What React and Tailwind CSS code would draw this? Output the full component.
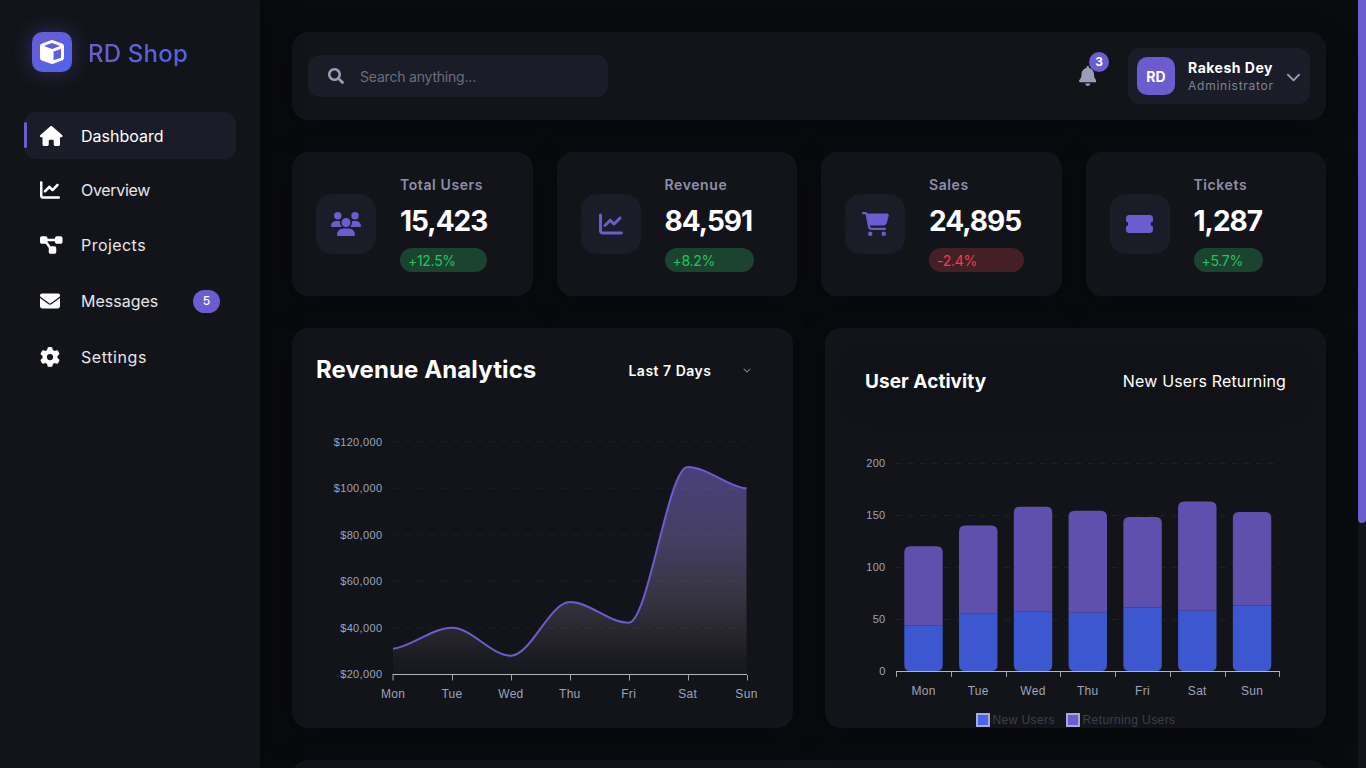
import React from 'react';
import { FaHouse, FaChartLine, FaDiagramProject, FaEnvelope, FaGear, FaUsers, FaCartShopping, FaTicketSimple, FaBell, FaChevronDown, FaCube } from 'react-icons/fa6';
import { FaSearch } from 'react-icons/fa';

const nav = [
  { label: 'Dashboard', icon: FaHouse, active: true, iconSize: 'w-[22.5px] h-5', track: 'tracking-[0px]', h: 'h-[47px]' },
  { label: 'Overview', icon: FaChartLine, iconSize: 'w-5 h-5', track: 'tracking-[-0.3px]', h: 'h-[46px]' },
  { label: 'Projects', icon: FaDiagramProject, iconSize: 'w-[22.5px] h-5', track: 'tracking-[0.45px]', h: 'h-[47px]' },
  { label: 'Messages', icon: FaEnvelope, badge: '5', iconSize: 'w-5 h-5', track: 'tracking-[0px]', h: 'h-[50px]' },
  { label: 'Settings', icon: FaGear, iconSize: 'w-5 h-5', track: 'tracking-[0.6px]', h: 'h-[46px]' },
];

const stats = [
  { label: 'Total Users', value: '15,423', delta: '+12.5%', up: true, icon: FaUsers, iconSize: 'w-[30px] h-6', w: 'w-[87px]' },
  { label: 'Revenue', value: '84,591', delta: '+8.2%', up: true, icon: FaChartLine, iconSize: 'w-6 h-6', w: 'w-[89px]' },
  { label: 'Sales', value: '24,895', delta: '-2.4%', up: false, icon: FaCartShopping, iconSize: 'w-[27px] h-6', w: 'w-[95px]' },
  { label: 'Tickets', value: '1,287', delta: '+5.7%', up: true, icon: FaTicketSimple, iconSize: 'w-[27px] h-6', w: 'w-[69px]' },
];

const days = ['Mon', 'Tue', 'Wed', 'Thu', 'Fri', 'Sat', 'Sun'];

function RevenueChart() {
  const xs = [393, 452, 510.9, 569.8, 628.7, 687.6, 746.5];
  const ys = [441.7, 488.2, 534.7, 581.2, 627.7, 674.2];
  const labels = ['$120,000', '$100,000', '$80,000', '$60,000', '$40,000', '$20,000'];
  const line = 'M393 648.7 C410 647.5 432.3 627.7 452 627.7 C471.6 627.7 491.3 655.7 510.9 655.7 C530.5 655.7 550.2 602 569.8 602 C589.4 602 609.1 622.7 628.7 622.7 C648.3 622.7 668 467 687.6 467 C707.2 467 730 488 746.5 488.3';
  return (
    <svg className="block mt-3 w-[453px] h-[304px] shrink-0" viewBox="316 400 453 304" fontFamily="'Liberation Sans', Arial, sans-serif">
      <defs>
        <linearGradient id="area" gradientUnits="userSpaceOnUse" x1="0" y1="467" x2="0" y2="674">
          <stop offset="0" stopColor="#4b3f7c" />
          <stop offset="0.35" stopColor="#453f63" />
          <stop offset="0.65" stopColor="#35333f" />
          <stop offset="0.84" stopColor="#232329" />
          <stop offset="0.92" stopColor="#1b1c22" />
          <stop offset="1" stopColor="#17181f" />
        </linearGradient>
      </defs>
      <path d={`${line} L746.5 674 L393 674 Z`} fill="url(#area)" />
      {ys.map((y, i) => (
        <g key={y}>
          {i < 5 && <line x1="393" x2="747" y1={y} y2={y} stroke="#ffffff" strokeOpacity="0.05" strokeDasharray="6 6" />}
          <text x="382.4" y={y + 4} textAnchor="end" fontSize="11" letterSpacing="0.35" fill="#9ca3bf">{labels[i]}</text>
        </g>
      ))}
      <path d={line} fill="none" stroke="#6c5ccf" strokeWidth="2" />
      <line x1="392.5" x2="747" y1="674.5" y2="674.5" stroke="#b4b4ba" />
      {xs.map((x, i) => {
        const tx = i === 0 ? 393 : Math.round(x) + 0.5;
        return (
          <g key={x}>
            <line x1={tx} x2={tx} y1="675" y2="680.5" stroke="#a0a0a8" />
            <text x={x} y="698" textAnchor="middle" fontSize="12" letterSpacing="0.3" fill="#9ca3bf">{days[i]}</text>
          </g>
        );
      })}
    </svg>
  );
}

function ActivityChart() {
  const bars = [
    [44, 120], [55, 140], [57, 158], [56, 154], [61, 148], [58, 163], [63, 153],
  ];
  const y0 = 671;
  const k = 1.04;
  const step = 54.76;
  const x0 = 896;
  const grid = [0, 50, 100, 150, 200];
  return (
    <svg className="block mt-4 w-[453px] h-[303px] shrink-0" viewBox="849 425 453 303" fontFamily="'Liberation Sans', Arial, sans-serif">
      {grid.map((g) => (
        <g key={g}>
          {g > 0 && <line x1="896" x2="1280" y1={y0 - g * k + 0.5} y2={y0 - g * k + 0.5} stroke="#ffffff" strokeOpacity="0.05" strokeDasharray="6 6" />}
          <text x="885.6" y={y0 - g * k + 4} textAnchor="end" fontSize="11" letterSpacing="0.35" fill="#9ca3bf">{g}</text>
        </g>
      ))}
      {Array.from({ length: 8 }).map((_, i) => {
        const tx = Math.round(x0 + i * step) + 0.5;
        return <line key={i} x1={tx} x2={tx} y1="672" y2="677" stroke="#a0a0a8" />;
      })}
      <line x1="896" x2="1280" y1="671.5" y2="671.5" stroke="#b4b4ba" />
      {bars.map(([a, b], i) => {
        const l = x0 + 8.3 + i * step;
        const r = l + 38.4;
        const ya = y0 - a * k;
        const yb = y0 - b * k;
        return (
          <g key={i}>
            <path d={`M${l} ${ya} V${yb + 6} Q${l} ${yb} ${l + 6} ${yb} H${r - 6} Q${r} ${yb} ${r} ${yb + 6} V${ya} Z`} fill="#6050ae" />
            <path d={`M${l} ${ya} V${y0 - 6} Q${l} ${y0} ${l + 6} ${y0} H${r - 6} Q${r} ${y0} ${r} ${y0 - 6} V${ya} Z`} fill="#3c57cf" />
            <text x={(l + r) / 2} y="695" textAnchor="middle" fontSize="12" letterSpacing="0.3" fill="#9ca3bf">{days[i]}</text>
          </g>
        );
      })}
      <rect x="977" y="714" width="12" height="12" fill="#4a63f0" stroke="#a4abd6" strokeWidth="2" />
      <text x="992.5" y="724" fontSize="12" letterSpacing="0.42" fill="#3d3f4b">New Users</text>
      <rect x="1067" y="714" width="12" height="12" fill="#6c5ccf" stroke="#a4abd6" strokeWidth="2" />
      <text x="1082.5" y="724" fontSize="12" letterSpacing="0.42" fill="#3d3f4b">Returning Users</text>
    </svg>
  );
}

export default function App() {
  return (
    <div className="flex h-screen overflow-hidden bg-[#0a0b0f] text-white font-['Inter',sans-serif]">
      <aside className="w-[260px] shrink-0 bg-[#13141a] px-6 py-8 shadow-[0_0_30px_rgba(0,0,0,0.5)] z-10">
        <div className="flex items-center gap-4 pl-2 mb-10">
          <div className="w-10 h-10 rounded-[10px] bg-gradient-to-br from-[#6c5ccf] to-[#4a63f0] flex items-center justify-center shadow-[0_0_20px_rgba(108,92,207,0.35)]">
            <FaCube className="text-white text-[24px]" />
          </div>
          <span className="pt-[3px] text-[24px] font-medium leading-none tracking-[0.2px] bg-gradient-to-r from-[#6c5ccf] to-[#4a63f0] bg-clip-text text-transparent">RD Shop</span>
        </div>
        <nav className="flex flex-col gap-2">
          {nav.map(({ label, icon: Icon, active, badge, iconSize, track, h }) => (
            <div key={label} className={`relative flex items-center px-4 rounded-xl ${h} ${active ? 'bg-[#1a1c27]' : ''}`}>
              {active && <span className="absolute left-0 top-[10px] w-[3px] h-[26px] rounded-full bg-[#6c5ccf]" />}
              <span className="w-[23px] flex items-center"><Icon className={`${iconSize} text-white`} /></span>
              <span className={`ml-[18px] text-[16px] ${track} ${active ? 'text-white' : 'text-[#e6e6ea]'}`}>{label}</span>
              {badge && <span className="ml-auto w-[27px] h-[23px] rounded-full bg-[#6c5ccf] flex items-center justify-center text-[12px] font-medium">{badge}</span>}
            </div>
          ))}
        </nav>
      </aside>

      <main className="flex-1 min-w-0 h-screen overflow-hidden p-8">
        <header className="h-[88px] px-4 rounded-2xl bg-[#13141a] flex items-center justify-between shadow-[0_8px_32px_rgba(0,0,0,0.3)]">
          <div className="w-[300px] h-[42px] rounded-xl bg-[#1a1c27] flex items-center pl-5 gap-4">
            <FaSearch className="text-[16px] text-[#9a9db5] shrink-0" />
            <input placeholder="Search anything..." className="bg-transparent outline-none w-full text-[14px] tracking-[-0.2px] placeholder:text-[#6b6e82]" />
          </div>
          <div className="flex items-center gap-[32px]">
            <div className="relative">
              <FaBell className="w-[17.5px] h-5 text-[#9a9db5]" />
              <span className="absolute -top-[14px] -right-[13px] w-5 h-5 rounded-full bg-[#6c5ccf] flex items-center justify-center text-[12px] font-bold">3</span>
            </div>
            <div className="w-[182px] h-14 rounded-xl bg-[#1a1c27] flex items-center pl-[9px] pr-[9px]">
              <div className="w-[38px] h-[38px] rounded-[10px] bg-[#6c5ccf] flex items-center justify-center text-[14px] font-bold">RD</div>
              <div className="ml-[13px] flex flex-col">
                <span className="text-[14px] font-bold leading-[18px] tracking-[0.5px]">Rakesh Dey</span>
                <span className="text-[12px] leading-[16px] pt-[1px] tracking-[0.75px] text-[#7f8299]">Administrator</span>
              </div>
              <FaChevronDown className="ml-auto text-[15px] text-[#9a9db5]" />
            </div>
          </div>
        </header>

        <section className="mt-8 grid grid-cols-4 gap-6">
          {stats.map(({ label, value, delta, up, icon: Icon, iconSize, w }) => (
            <div key={label} className="h-[144px] rounded-2xl bg-[#13141a] p-6 flex items-center gap-6 shadow-[0_8px_32px_rgba(0,0,0,0.3)]">
              <div className="w-[60px] h-[60px] rounded-2xl bg-[#1a1c27] flex items-center justify-center shrink-0">
                <Icon className={`${iconSize} text-[#6c5ccf]`} />
              </div>
              <div className="flex flex-col">
                <span className="text-[14px] font-semibold leading-[18px] tracking-[0.6px] text-[#8d90a8]">{label}</span>
                <span className="mt-[10px] text-[28px] font-bold leading-[34px] tracking-[-1px] whitespace-nowrap">{value}</span>
                <span className={`mt-[10px] ${w} h-6 rounded-full px-2 flex items-center text-[14px] tracking-[-0.3px] ${up ? 'bg-[#1a4430] text-[#22c55e]' : 'bg-[#451f26] text-[#f03e52]'}`}>{delta}</span>
              </div>
            </div>
          ))}
        </section>

        <section className="mt-8 grid grid-cols-2 gap-8">
          <div className="h-[400px] rounded-2xl bg-[#13141a] p-6 overflow-hidden shadow-[0_8px_32px_rgba(0,0,0,0.3)]">
            <div className="h-9 flex items-center">
              <h2 className="text-[24px] font-bold tracking-[0.1px]">Revenue Analytics</h2>
              <span className="ml-[92px] text-[14px] font-semibold tracking-[0.5px]">Last 7 Days</span>
              <FaChevronDown className="ml-[32px] text-[8px] text-[#8a8da3]" />
            </div>
            <RevenueChart />
          </div>
          <div className="h-[400px] rounded-2xl bg-[#13141a] p-6 overflow-hidden shadow-[0_8px_32px_rgba(0,0,0,0.3)]">
            <div className="h-[57px] rounded-2xl bg-[#111218] px-4 flex items-center justify-between shadow-[0_4px_20px_rgba(0,0,0,0.12)]">
              <h2 className="pt-[3px] text-[19px] font-bold tracking-[0.05px]">User Activity</h2>
              <span className="text-[16px] tracking-[0.15px]">New Users Returning</span>
            </div>
            <ActivityChart />
          </div>
        </section>

        <section className="mt-8 h-[336px] rounded-2xl bg-[#13141a] shadow-[0_8px_32px_rgba(0,0,0,0.3)]" />
      </main>

      <div className="w-2 shrink-0 h-screen bg-[#13141a]">
        <div className="h-[523px] rounded-b-[4px] bg-[#6c5ccf]" />
      </div>
    </div>
  );
}
